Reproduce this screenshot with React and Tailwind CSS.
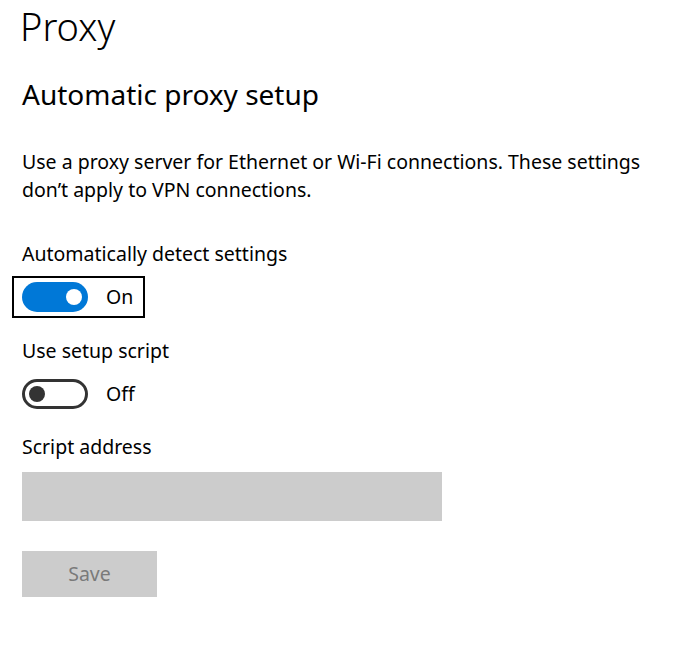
export default function App() {
  const font = { fontFamily: '"Noto Sans", "Open Sans", sans-serif' };
  return (
    <div className="min-h-[647px] w-[683px] bg-white text-black pl-[22px]" style={font}>
      <h1 className="h-[52px] text-[38px] leading-[52px] font-light -ml-[2px]">Proxy</h1>

      <h2 className="mt-[24px] h-[36px] text-[28px] leading-[36px] font-normal">Automatic proxy setup</h2>

      <p className="mt-[36px] text-[19.5px] leading-[28px]">
        Use a proxy server for Ethernet or Wi-Fi connections. These settings don’t apply to VPN connections.
      </p>

      <div className="mt-[36px] h-[28px] text-[19.5px] leading-[28px]">Automatically detect settings</div>
      <div className="mt-[8px] -ml-[10px] inline-flex items-center border-2 border-black pl-[8px] pr-[10px] py-[4px]">
        <div className="w-[66px] h-[30px] rounded-full bg-[#0078d7] flex items-center justify-end pr-[6px]">
          <div className="w-[16px] h-[16px] rounded-full bg-white" />
        </div>
        <span className="ml-[18px] text-[19.5px] leading-[28px]">On</span>
      </div>

      <div className="mt-[19px] h-[28px] text-[19.5px] leading-[28px]">Use setup script</div>
      <div className="mt-[14px] flex items-center">
        <div className="w-[66px] h-[30px] rounded-full border-[3px] border-[#333333] flex items-center pl-[4px]">
          <div className="w-[16px] h-[16px] rounded-full bg-[#333333]" />
        </div>
        <span className="ml-[18px] text-[19.5px] leading-[28px]">Off</span>
      </div>

      <div className="mt-[24px] h-[28px] text-[19.5px] leading-[28px]">Script address</div>
      <div className="mt-[11px] w-[420px] h-[49px] bg-[#cccccc]" />

      <button className="mt-[30px] block w-[135px] h-[46px] bg-[#cccccc] text-[19.5px] text-[#7a7a7a]" style={font}>
        Save
      </button>
    </div>
  );
}
